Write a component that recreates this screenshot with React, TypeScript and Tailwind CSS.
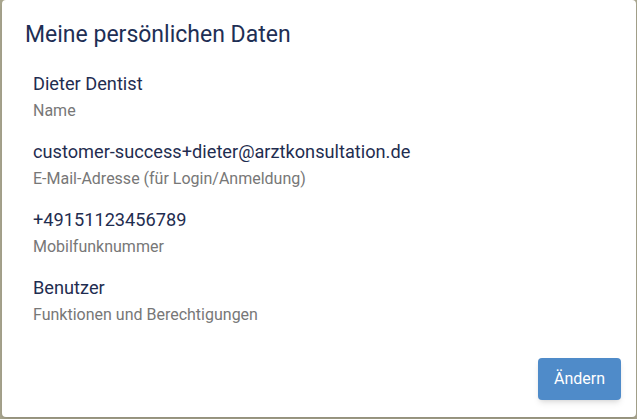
const items = [
  { value: "Dieter Dentist", label: "Name" },
  {
    value: "customer-success+dieter@arztkonsultation.de",
    label: "E-Mail-Adresse (für Login/Anmeldung)",
  },
  { value: "+49151123456789", label: "Mobilfunknummer" },
  { value: "Benutzer", label: "Funktionen und Berechtigungen" },
];

export default function App() {
  return (
    <div
      className="w-[637px] h-[419px] bg-[#a9a68f] pl-[2px] pr-[1px] pb-[2px]"
      style={{ fontFamily: "Roboto, 'Noto Sans', sans-serif" }}
    >
      <div className="h-full bg-white rounded-[4px] shadow-md flex flex-col pt-[19px] pl-[23px] pr-[15px] pb-[17px]">
        <h2 className="text-[23px] leading-8 font-normal text-[#1e2f55]">
          Meine persönlichen Daten
        </h2>

        <ul className="mt-[21px] pl-[8px] flex flex-col gap-[19px] flex-1">
          {items.map((item) => (
            <li key={item.label}>
              <p className="text-[18.2px] leading-6 text-[#1f2d50]">{item.value}</p>
              <p className="mt-[5px] text-base leading-5 text-[#777777]">{item.label}</p>
            </li>
          ))}
        </ul>

        <div className="flex justify-end">
          <button
            type="button"
            className="h-[42px] px-4 rounded-[4px] bg-[#4f8bc9] text-white text-base shadow-md"
          >
            Ändern
          </button>
        </div>
      </div>
    </div>
  );
}
